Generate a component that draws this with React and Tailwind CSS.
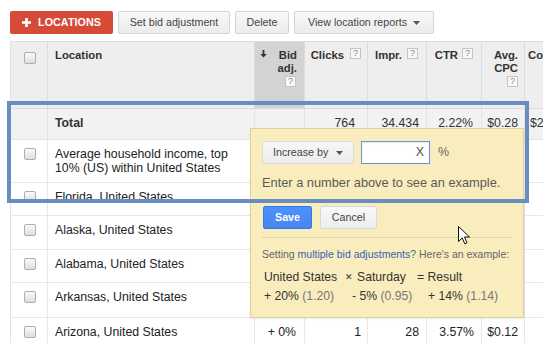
import React from "react";

/* ---------- data ---------- */
const rows = [
  { name: ["Average household income, top", "10% (US) within United States"], h: "h-[43px]", bid: "+ 10%", clicks: "11", impr: "2.904", ctr: "0.38%", cpc: "$0.41" },
  { name: ["Florida, United States"], h: "h-[33px]", bid: "+ 0%", clicks: "9", impr: "412", ctr: "2.18%", cpc: "$0.33" },
  { name: ["Alaska, United States"], h: "h-[34px]", bid: "+ 0%", clicks: "4", impr: "160", ctr: "2.50%", cpc: "$0.22" },
  { name: ["Alabama, United States"], h: "h-[33px]", bid: "+ 0%", clicks: "3", impr: "97", ctr: "3.09%", cpc: "$0.19" },
  { name: ["Arkansas, United States"], h: "h-[35px]", bid: "+ 0%", clicks: "2", impr: "61", ctr: "3.28%", cpc: "$0.25" },
  { name: ["Arizona, United States"], h: "h-[34px]", bid: "+ 0%", clicks: "1", impr: "28", ctr: "3.57%", cpc: "$0.12" },
];

/* ---------- bits ---------- */
function Check() {
  return <span className="block h-[12px] w-[12px] rounded-[2px] border border-[#aeaeae] bg-linear-to-b from-[#fafafa] to-[#dedede]" />;
}

function Help({ className = "" }) {
  return (
    <span className={`inline-flex h-[11px] w-[11px] shrink-0 items-center justify-center border border-[#c4c4c4] bg-[#f8f8f8] text-[9px] font-normal leading-none text-[#888] ${className}`}>
      ?
    </span>
  );
}

function Caret({ className = "" }) {
  return (
    <svg width="7" height="4" viewBox="0 0 7 4" className={className}>
      <path d="M0 0h7L3.5 4z" fill="#555" />
    </svg>
  );
}

function Cursor() {
  return (
    <svg width="13" height="19" viewBox="0 0 13 19" className="absolute left-[207px] top-[97px]">
      <path d="M0.5 0.5V15.5L4.2 11.9L6.8 17.8L9 16.8L6.5 11H11.6Z" fill="#fff" stroke="#111" strokeWidth="1" strokeLinejoin="round" />
    </svg>
  );
}

/* ---------- page ---------- */
export default function App() {
  const btn = "h-[23px] rounded-[2px] border border-[#d4d4d4] bg-linear-to-b from-[#f8f8f8] to-[#ececec] text-[#444]";

  return (
    <div className="relative h-[343px] w-[543px] overflow-hidden bg-white font-['Liberation_Sans',Arial,sans-serif]">
      {/* toolbar */}
      <div className="flex gap-[5px] pl-[10px] pt-[11px] text-[10.7px]">
        <button className="flex h-[23px] w-[103px] items-center rounded-[2px] bg-[#d64a38] pl-[12px] font-bold text-white">
          <svg width="9" height="9" viewBox="0 0 9 9">
            <path d="M4.5 0v9M0 4.5h9" stroke="#fff" strokeWidth="2.6" />
          </svg>
          <span className="ml-[7px] tracking-[0.1px]">LOCATIONS</span>
        </button>
        <button className={`${btn} w-[112px]`}>Set bid adjustment</button>
        <button className={`${btn} w-[54px]`}>Delete</button>
        <button className={`${btn} flex w-[140px] items-center pl-[13px]`}>
          View location reports
          <Caret className="ml-[6px]" />
        </button>
      </div>

      {/* table */}
      <div className="ml-[10px] mt-[7px] w-[580px] border-l border-[#e2e2e2]">
        {/* header */}
        <div className="flex h-[68px] border-y border-[#dcdcdc] bg-[#eeeeee] text-[11.3px] font-bold leading-[13px] text-[#333]">
          <div className="w-[37px] shrink-0 border-r border-[#dcdcdc] pl-[13px] pt-[10px]">
            <Check />
          </div>
          <div className="w-[207px] shrink-0 border-r border-[#dcdcdc] pl-[7px] pt-[7px]">Location</div>
          <div className="relative w-[50px] shrink-0 border-r border-[#dcdcdc] bg-[#d3d3d3] pr-[7px] pt-[7px] text-right">
            <svg width="7" height="8" viewBox="0 0 7 8" className="absolute left-[5px] top-[8px]">
              <path d="M3.5 0v5" stroke="#333" strokeWidth="1.8" />
              <path d="M0.3 4h6.4L3.5 7.6z" fill="#333" />
            </svg>
            <div>Bid</div>
            <div>adj.</div>
            <div className="mt-px flex justify-end pr-px">
              <Help />
            </div>
          </div>
          <div className="flex w-[63px] shrink-0 justify-end border-r border-[#dcdcdc] pr-[6px] pt-[7px]">
            Clicks
            <Help className="-mt-px ml-[6px]" />
          </div>
          <div className="flex w-[59px] shrink-0 justify-end border-r border-[#dcdcdc] pr-[8px] pt-[7px]">
            Impr.
            <Help className="-mt-px ml-[5px]" />
          </div>
          <div className="flex w-[55px] shrink-0 justify-end border-r border-[#dcdcdc] pr-[8px] pt-[7px]">
            CTR
            <Help className="-mt-px ml-[4px]" />
          </div>
          <div className="w-[43px] shrink-0 border-r border-[#dcdcdc] pr-[6px] pt-[7px] text-right">
            <div>Avg.</div>
            <div>CPC</div>
            <div className="mt-px flex justify-end">
              <Help />
            </div>
          </div>
          <div className="w-[60px] shrink-0 pl-[3px] pt-[7px]">Cost</div>
        </div>

        {/* total */}
        <div className="flex h-[31px] border-b border-[#e4e4e4] bg-[#f2f2f2] text-[12.3px] leading-[14px] text-[#333]">
          <div className="w-[37px] shrink-0 border-r border-[#e4e4e4]" />
          <div className="w-[207px] shrink-0 border-r border-[#e4e4e4] pl-[7px] pt-[7px] font-bold">Total</div>
          <div className="w-[50px] shrink-0 border-r border-[#e4e4e4]" />
          <div className="w-[63px] shrink-0 border-r border-[#e4e4e4] pr-[12px] pt-[7px] text-right">764</div>
          <div className="w-[59px] shrink-0 border-r border-[#e4e4e4] pr-[7px] pt-[7px] text-right">34.434</div>
          <div className="w-[55px] shrink-0 border-r border-[#e4e4e4] pr-[8px] pt-[7px] text-right">2.22%</div>
          <div className="w-[43px] shrink-0 border-r border-[#e4e4e4] pr-[6px] pt-[7px] text-right">$0.28</div>
          <div className="w-[60px] shrink-0 pl-[5px] pt-[7px]">$214.53</div>
        </div>

        {/* rows */}
        {rows.map((r) => (
          <div key={r.name[0]} className={`flex border-b border-[#e8e8e8] text-[12.3px] leading-[14px] text-[#222] ${r.h}`}>
            <div className="w-[37px] shrink-0 border-r border-[#e8e8e8] pl-[13px] pt-[8px]">
              <Check />
            </div>
            <div className="w-[207px] shrink-0 border-r border-[#e8e8e8] pl-[7px] pt-[7px]">
              {r.name.map((l) => (
                <div key={l}>{l}</div>
              ))}
            </div>
            <div className="w-[50px] shrink-0 border-r border-[#e8e8e8] pr-[8px] pt-[7px] text-right">{r.bid}</div>
            <div className="w-[63px] shrink-0 border-r border-[#e8e8e8] pr-[6px] pt-[7px] text-right">{r.clicks}</div>
            <div className="w-[59px] shrink-0 border-r border-[#e8e8e8] pr-[7px] pt-[7px] text-right">{r.impr}</div>
            <div className="w-[55px] shrink-0 border-r border-[#e8e8e8] pr-[7px] pt-[7px] text-right">{r.ctr}</div>
            <div className="w-[43px] shrink-0 border-r border-[#e8e8e8] pr-[6px] pt-[7px] text-right">{r.cpc}</div>
            <div className="w-[60px] shrink-0" />
          </div>
        ))}
      </div>

      {/* bid adjustment popup */}
      <div className="absolute left-[250px] top-[128px] h-[190px] w-[274px] border border-[#dcd09e] bg-[#f9edbe] pl-[11px] pr-[11px] pt-[12px] text-[#333] shadow-[0_1px_2px_rgba(0,0,0,0.08)]">
        <div className="flex items-center text-[10.7px]">
          <button className="flex h-[23px] w-[92px] items-center rounded-[2px] border border-[#dcdcdc] bg-linear-to-b from-[#f7f7f7] to-[#ececec] pl-[10px] text-[#444]">
            Increase by
            <Caret className="ml-[8px]" />
          </button>
          <div className="ml-[7px] flex h-[23px] w-[69px] items-center justify-end border border-[#6b92d8] bg-white pr-[5px] text-[12.5px] text-[#555] shadow-[inset_0_1px_2px_rgba(0,0,0,0.1)]">
            X
          </div>
          <span className="ml-[8px] text-[12.5px] text-[#666]">%</span>
        </div>
        <div className="mt-[11px] text-[12.8px] leading-[16px] text-[#5a5a5a]">Enter a number above to see an example.</div>
        <div className="mt-[15px] flex gap-[8px] text-[10.7px]">
          <button className="ml-px h-[23px] w-[49px] rounded-[2px] border border-[#3079ed] bg-linear-to-b from-[#4d90fe] to-[#4787ed] font-bold text-white">
            Save
          </button>
          <button className="h-[23px] w-[57px] rounded-[2px] border border-[#d8d8d8] bg-linear-to-b from-[#f8f8f8] to-[#eeeeee] text-[#444]">
            Cancel
          </button>
        </div>
        <div className="mt-[8px] border-t border-[#e3d7a6]" />
        <div className="mt-[9px] text-[10.5px] leading-[14px] text-[#666]">
          Setting <span className="text-[#3a5fb0]">multiple bid adjustments</span>? Here's an example:
        </div>
        <div className="mt-[8px] grid grid-cols-[81px_72px_1fr] pl-[2px] text-[12.2px] leading-[16px] text-[#333]">
          <div>United States</div>
          <div className="flex items-center">
            <span className="text-[9px]">✕</span>
            <span className="ml-[4px]">Saturday</span>
          </div>
          <div>= Result</div>
          <div className="mt-[3px]">
            + 20% <span className="text-[#777]">(1.20)</span>
          </div>
          <div className="mt-[3px] pl-[7px]">
            - 5% <span className="text-[#777]">(0.95)</span>
          </div>
          <div className="mt-[3px] pl-[11px]">
            + 14% <span className="text-[#777]">(1.14)</span>
          </div>
        </div>
        <Cursor />
      </div>

      {/* annotation highlight */}
      <div className="absolute left-[7px] top-[101px] h-[102px] w-[522px] border-[4px] border-[#6a8dc0]" />
    </div>
  );
}
